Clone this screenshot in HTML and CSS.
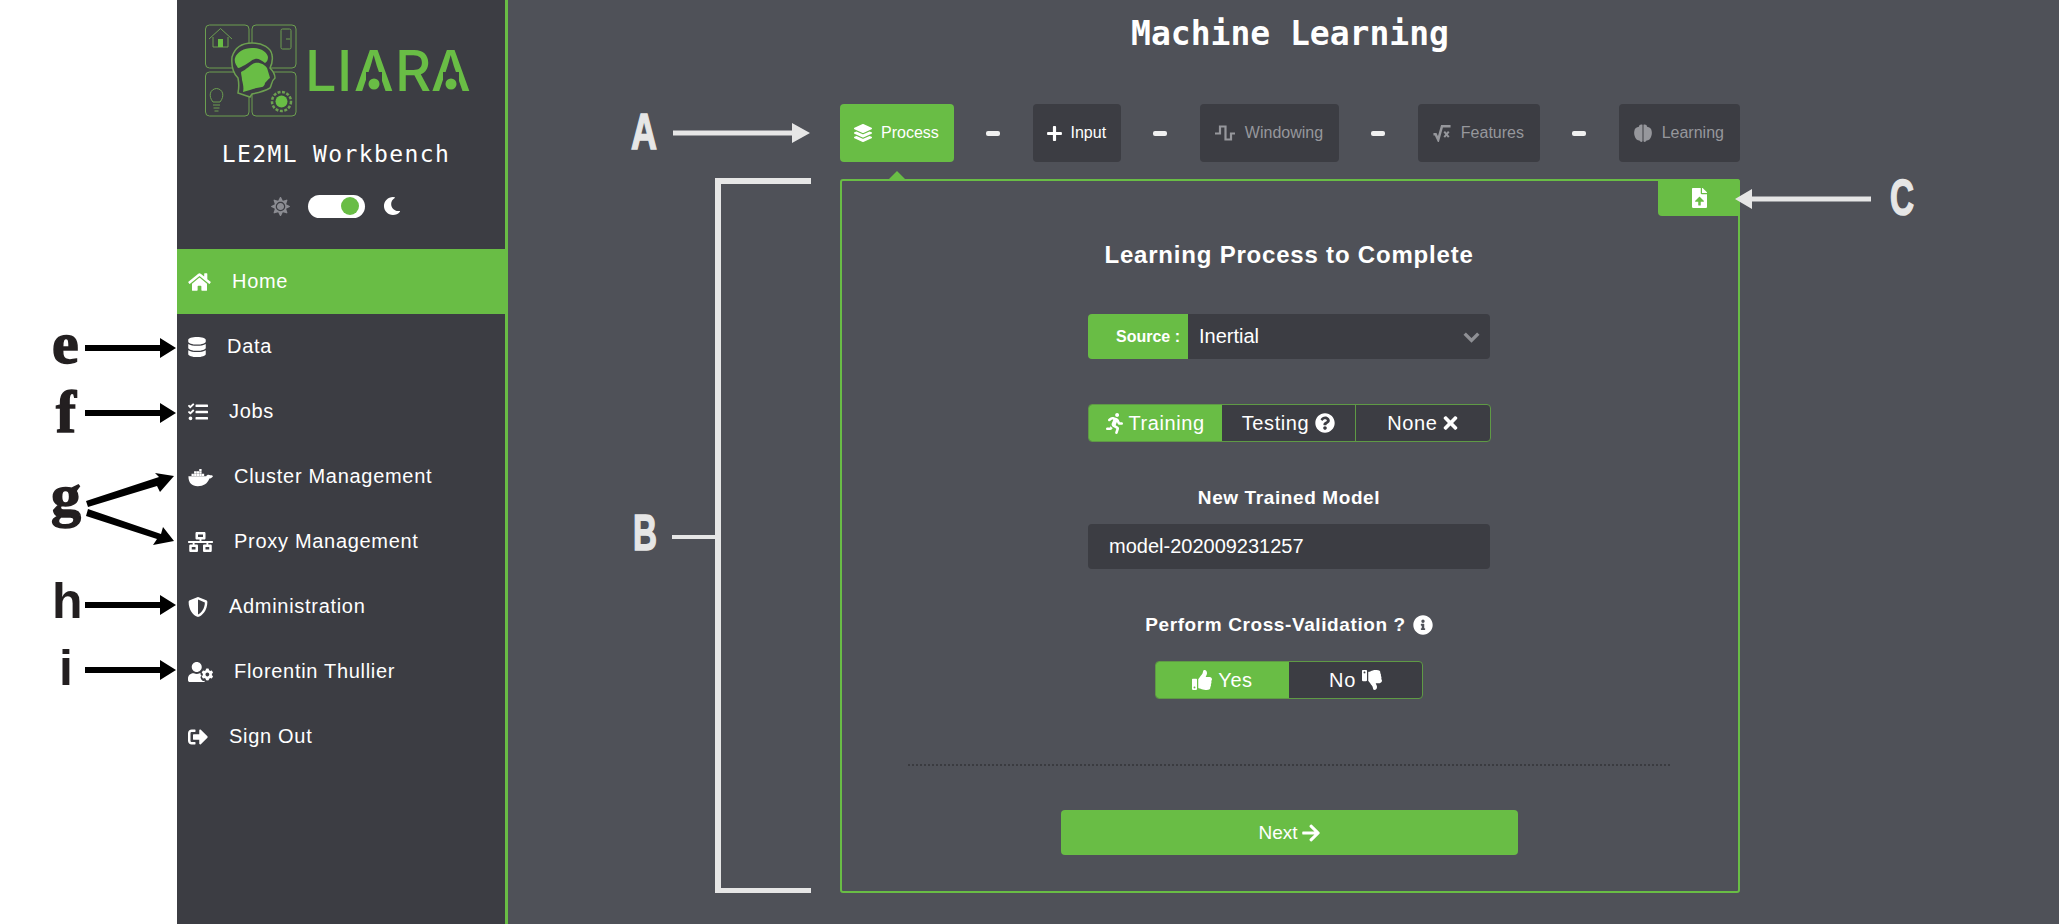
FILE: index.html
```html
<!DOCTYPE html>
<html lang="en">
<head>
    <meta charset="UTF-8">
    <meta name="viewport" content="width=device-width, initial-scale=1.0">
    <title>LE2ML Workbench</title>
    <link rel="stylesheet" href="styles.css">
</head>
<body>
    <svg class="icon-defs" aria-hidden="true">
        <symbol id="i-home" viewBox="0 0 576 512"><path d="M280.37 148.26L96 300.11V464a16 16 0 0 0 16 16l112.06-.29a16 16 0 0 0 15.92-16V368a16 16 0 0 1 16-16h64a16 16 0 0 1 16 16v95.64a16 16 0 0 0 16 16.05L464 480a16 16 0 0 0 16-16V300L295.67 148.26a12.19 12.19 0 0 0-15.3 0zM571.6 251.47L488 182.56V44.05a12 12 0 0 0-12-12h-56a12 12 0 0 0-12 12v72.61L318.47 43a48 48 0 0 0-61 0L4.34 251.47a12 12 0 0 0-1.6 16.9l25.5 31A12 12 0 0 0 45.15 301l235.22-193.74a12.19 12.19 0 0 1 15.3 0L530.9 301a12 12 0 0 0 16.9-1.6l25.5-31a12 12 0 0 0-1.7-16.93z"/></symbol>
        <symbol id="i-database" viewBox="0 0 448 512"><path d="M448 73.143v45.714C448 159.143 347.667 192 224 192S0 159.143 0 118.857V73.143C0 32.857 100.333 0 224 0s224 32.857 224 73.143zM448 176v102.857C448 319.143 347.667 352 224 352S0 319.143 0 278.857V176c48.125 33.143 136.208 48.572 224 48.572S399.874 209.143 448 176zm0 160v102.857C448 479.143 347.667 512 224 512S0 479.143 0 438.857V336c48.125 33.143 136.208 48.572 224 48.572S399.874 369.143 448 336z"/></symbol>
        <symbol id="i-tasks" viewBox="0 0 512 512"><path d="M139.61 35.5a12 12 0 0 0-17 0L58.93 98.81l-22.7-22.12a12 12 0 0 0-17 0L3.53 92.41a12 12 0 0 0 0 17l47.59 47.4a12.78 12.78 0 0 0 17.61 0l15.59-15.62L156.52 69a12.09 12.09 0 0 0 .09-17zm0 159.19a12 12 0 0 0-17 0l-63.68 63.72-22.7-22.1a12 12 0 0 0-17 0L3.53 252a12 12 0 0 0 0 17L51 316.5a12.77 12.77 0 0 0 17.6 0l15.7-15.69 72.2-72.22a12 12 0 0 0 .09-16.9zM64 368c-26.49 0-48.59 21.5-48.59 48S37.53 464 64 464a48 48 0 0 0 0-96zm432 16H208a16 16 0 0 0-16 16v32a16 16 0 0 0 16 16h288a16 16 0 0 0 16-16v-32a16 16 0 0 0-16-16zm0-320H208a16 16 0 0 0-16 16v32a16 16 0 0 0 16 16h288a16 16 0 0 0 16-16V80a16 16 0 0 0-16-16zm0 160H208a16 16 0 0 0-16 16v32a16 16 0 0 0 16 16h288a16 16 0 0 0 16-16v-32a16 16 0 0 0-16-16z"/></symbol>
        <symbol id="i-docker" viewBox="0 0 640 512"><path d="M10 235H468C478 195 530 185 572 210C612 205 632 220 640 235C616 280 572 292 548 292C500 420 400 490 250 490C100 490 14 410 10 235Z"/><path d="M90 172h60v56h-60zM156 172h60v56h-60zM222 172h60v56h-60zM288 172h60v56h-60zM354 172h60v56h-60zM156 110h60v56h-60zM222 110h60v56h-60zM288 110h60v56h-60zM288 48h60v56h-60z"/></symbol>
        <symbol id="i-network" viewBox="0 0 640 512"><path d="M640 264v-16c0-8.84-7.16-16-16-16H344v-40h72c17.67 0 32-14.33 32-32V32c0-17.67-14.33-32-32-32H224c-17.67 0-32 14.33-32 32v128c0 17.67 14.33 32 32 32h72v40H16c-8.84 0-16 7.16-16 16v16c0 8.84 7.16 16 16 16h104v40H64c-17.67 0-32 14.33-32 32v128c0 17.67 14.33 32 32 32h160c17.67 0 32-14.33 32-32V352c0-17.67-14.33-32-32-32h-56v-40h304v40h-56c-17.67 0-32 14.33-32 32v128c0 17.67 14.33 32 32 32h160c17.67 0 32-14.33 32-32V352c0-17.67-14.33-32-32-32h-56v-40h104c8.84 0 16-7.16 16-16zM256 128V64h128v64H256zm-64 320H96v-64h96v64zm352 0h-96v-64h96v64z"/></symbol>
        <symbol id="i-shield" viewBox="0 0 512 512"><path d="M466.5 83.7l-192-80a48.15 48.15 0 0 0-36.9 0l-192 80C27.7 91.1 16 108.6 16 128c0 198.5 114.5 335.7 221.5 380.3 11.8 4.9 25.1 4.9 36.9 0C360.1 472.6 496 349.3 496 128c0-19.4-11.7-36.9-29.5-44.3zM256.1 446.3l-.1-381 175.9 73.3c-3.3 151.4-82.1 261.1-175.8 307.7z"/></symbol>
        <symbol id="i-user-cog" viewBox="0 0 640 512"><path d="M610.5 341.3c2.6-14.1 2.6-28.5 0-42.6l25.8-14.9c3-1.7 4.3-5.2 3.3-8.5-6.7-21.6-18.2-41.2-33.2-57.4-2.3-2.5-6-3.1-9-1.4l-25.8 14.9c-10.9-9.3-23.4-16.5-36.9-21.3v-29.8c0-3.4-2.4-6.4-5.7-7.1-22.3-5-45-4.8-66.2 0-3.3.7-5.7 3.7-5.7 7.1v29.8c-13.5 4.8-26 12-36.9 21.3l-25.8-14.9c-2.9-1.7-6.7-1.1-9 1.4-15 16.2-26.5 35.8-33.2 57.4-1 3.3.4 6.8 3.3 8.5l25.8 14.9c-2.6 14.1-2.6 28.5 0 42.6l-25.8 14.9c-3 1.7-4.3 5.2-3.3 8.5 6.7 21.6 18.2 41.1 33.2 57.4 2.3 2.5 6 3.1 9 1.4l25.8-14.9c10.9 9.3 23.4 16.5 36.9 21.3v29.8c0 3.4 2.4 6.4 5.7 7.1 22.3 5 45 4.8 66.2 0 3.3-.7 5.7-3.7 5.7-7.1v-29.8c13.5-4.8 26-12 36.9-21.3l25.8 14.9c2.9 1.7 6.7 1.1 9-1.4 15-16.2 26.5-35.8 33.2-57.4 1-3.3-.4-6.8-3.3-8.5l-25.8-14.9zM496 368.5c-26.8 0-48.5-21.8-48.5-48.5s21.8-48.5 48.5-48.5 48.5 21.8 48.5 48.5-21.7 48.5-48.5 48.5zM224 256c70.7 0 128-57.3 128-128S294.7 0 224 0 96 57.3 96 128s57.3 128 128 128zm201.2 226.5c-2.3-1.2-4.6-2.6-6.8-3.9l-7.9 4.6c-6 3.4-12.8 5.3-19.6 5.3-10.9 0-21.4-4.6-28.9-12.6-18.3-19.8-32.3-43.9-40.2-69.6-5.5-17.7 1.9-36.4 17.9-45.7l7.9-4.6c-.1-2.6-.1-5.2 0-7.8l-7.9-4.6c-16-9.2-23.4-28-17.9-45.7.9-2.9 2.2-5.8 3.2-8.7-3.8-.3-7.5-1.2-11.4-1.2h-16.7c-22.2 10.2-46.9 16-72.9 16s-50.6-5.8-72.9-16h-16.7C60.2 288 0 348.2 0 422.4V464c0 26.5 21.5 48 48 48h352c10.1 0 19.5-3.2 27.2-8.5-1.2-3.8-2-7.7-2-11.8v-9.2z"/></symbol>
        <symbol id="i-sign-out" viewBox="0 0 512 512"><path d="M497 273L329 441c-15 15-41 4.5-41-17v-96H152c-13.3 0-24-10.7-24-24v-96c0-13.3 10.7-24 24-24h136V88c0-21.4 25.9-32 41-17l168 168c9.3 9.4 9.3 24.6 0 34zM192 436v-40c0-6.6-5.4-12-12-12H96c-17.7 0-32-14.3-32-32V160c0-17.7 14.3-32 32-32h84c6.6 0 12-5.4 12-12V76c0-6.6-5.4-12-12-12H96c-53 0-96 43-96 96v192c0 53 43 96 96 96h84c6.6 0 12-5.4 12-12z"/></symbol>
        <symbol id="i-sun" viewBox="0 0 512 512"><path d="M256 160c-52.9 0-96 43.1-96 96s43.1 96 96 96 96-43.1 96-96-43.1-96-96-96zm246.4 80.5l-94.7-47.3 33.5-100.4c4.5-13.6-8.4-26.5-21.9-21.9l-100.4 33.5-47.4-94.8c-6.4-12.8-24.6-12.8-31 0l-47.3 94.7L92.7 70.8c-13.6-4.5-26.5 8.4-21.9 21.9l33.5 100.4-94.7 47.4c-12.8 6.4-12.8 24.6 0 31l94.7 47.3-33.5 100.5c-4.5 13.6 8.4 26.5 21.9 21.9l100.4-33.5 47.3 94.7c6.4 12.8 24.6 12.8 31 0l47.3-94.7 100.4 33.5c13.6 4.5 26.5-8.4 21.9-21.9l-33.5-100.4 94.7-47.3c13-6.5 13-24.7.2-31.1zm-155.9 106c-49.9 49.9-131.1 49.9-181 0-49.9-49.9-49.9-131.1 0-181 49.9-49.9 131.1-49.9 181 0 49.9 49.9 49.9 131.1 0 181z"/></symbol>
        <symbol id="i-moon" viewBox="0 0 512 512"><path d="M283.211 512c78.962 0 151.079-35.925 198.857-94.792 7.068-8.708-.639-21.43-11.562-19.35-124.203 23.654-238.262-71.576-238.262-196.954 0-72.222 38.662-138.635 101.498-174.394 9.686-5.512 7.25-20.197-3.756-22.23A258.156 258.156 0 0 0 283.211 0c-141.309 0-256 114.511-256 256 0 141.309 114.511 256 256 256z"/></symbol>
        <symbol id="i-layers" viewBox="0 0 512 512"><path d="M12.41 148.02l232.94 105.67c6.8 3.09 14.49 3.09 21.29 0l232.94-105.67c16.55-7.51 16.55-32.52 0-40.03L266.65 2.31a25.607 25.607 0 0 0-21.29 0L12.41 107.98c-16.55 7.51-16.55 32.53 0 40.04zm487.18 88.28l-58.09-26.33-161.64 73.27c-7.56 3.43-15.59 5.17-23.86 5.17s-16.29-1.74-23.86-5.17L70.51 209.97l-58.1 26.33c-16.55 7.5-16.55 32.5 0 40l232.94 105.59c6.8 3.08 14.49 3.08 21.29 0L499.59 276.3c16.55-7.5 16.55-32.5 0-40zm0 127.8l-57.87-26.23-161.86 73.37c-7.56 3.43-15.59 5.17-23.86 5.17s-16.29-1.74-23.86-5.17L70.29 337.87 12.41 364.1c-16.55 7.5-16.55 32.5 0 40l232.94 105.59c6.8 3.08 14.49 3.08 21.29 0L499.59 404.1c16.55-7.5 16.55-32.5 0-40z"/></symbol>
        <symbol id="i-plus" viewBox="0 0 448 512"><path d="M416 208H272V64c0-17.67-14.33-32-32-32h-32c-17.67 0-32 14.33-32 32v144H32c-17.67 0-32 14.33-32 32v32c0 17.67 14.33 32 32 32h144v144c0 17.67 14.33 32 32 32h32c17.67 0 32-14.33 32-32V304h144c17.67 0 32-14.33 32-32v-32c0-17.67-14.33-32-32-32z"/></symbol>
        <symbol id="i-wave" viewBox="0 0 20 20"><path d="M0 10.5h5V3.5h5.500v13H16v-6h4" fill="none" stroke="currentColor" stroke-width="2.2"/></symbol>
        <symbol id="i-sqrt" viewBox="0 0 20 20"><path d="M0.5 11.500h2.500l2.800 6L10 2.500h9.500" fill="none" stroke="currentColor" stroke-width="2.800"/><path d="M12.500 8.500l5 6M17.500 8.500l-5 6" fill="none" stroke="currentColor" stroke-width="2.200"/></symbol>
        <symbol id="i-brain" viewBox="40 10 432 480" preserveAspectRatio="none"><path d="M244 30C195 10 165 40 158 80C105 90 50 130 50 190C40 230 40 300 60 340C70 400 125 450 170 450C190 490 225 500 244 470Z"/><path d="M268 30C317 10 347 40 354 80C407 90 462 130 462 190C472 230 472 300 452 340C442 400 387 450 342 450C322 490 287 500 268 470Z"/></symbol>
        <symbol id="i-file-up" viewBox="0 0 384 512"><path d="M224 136V0H24C10.7 0 0 10.7 0 24v464c0 13.3 10.7 24 24 24h336c13.3 0 24-10.7 24-24V160H248c-13.2 0-24-10.8-24-24zm65.18 216.01H224v80c0 8.84-7.16 16-16 16h-32c-8.84 0-16-7.16-16-16v-80H94.82c-14.28 0-21.41-17.29-11.27-27.36l96.42-95.7c6.65-6.61 17.39-6.61 24.04 0l96.42 95.7c10.15 10.07 3.03 27.36-11.23 27.36zM377 105L279.1 7c-4.5-4.5-10.6-7-17-7H256v128h128v-6.1c0-6.3-2.5-12.4-7-16.9z"/></symbol>
        <symbol id="i-running" viewBox="0 0 416 512"><path d="M272 96c26.51 0 48-21.49 48-48S298.51 0 272 0s-48 21.49-48 48 21.49 48 48 48zM113.69 317.47l-14.8 34.52H32c-17.67 0-32 14.33-32 32s14.33 32 32 32h77.45c19.25 0 36.58-11.44 44.11-29.09l8.79-20.52-10.67-6.3c-17.32-10.23-30.06-25.37-37.99-42.61zM384 223.99h-44.03l-26.06-53.25c-12.5-25.55-35.45-44.23-61.78-50.94l-71.08-21.14c-28.3-6.8-57.77-.55-80.84 17.14l-39.67 30.41c-14.03 10.75-16.69 30.83-5.92 44.86s30.84 16.66 44.86 5.92l39.69-30.41c7.67-5.89 17.44-8 25.27-6.14l14.7 4.37-37.46 87.39c-12.62 29.48-1.31 64.01 26.3 80.31l84.98 50.17-27.47 87.73c-5.28 16.86 4.11 34.81 20.97 40.09 3.19 1 6.41 1.48 9.58 1.48 13.61 0 26.23-8.77 30.52-22.45l31.64-101.06c5.91-20.77-2.89-43.08-21.64-54.39l-61.24-36.14 31.31-78.28 20.27 41.43c8 16.34 24.92 26.89 43.11 26.89H384c17.67 0 32-14.33 32-32s-14.33-31.99-32-31.99z"/></symbol>
        <symbol id="i-question" viewBox="0 0 512 512"><path d="M504 256c0 136.997-111.043 248-248 248S8 392.997 8 256C8 119.083 119.043 8 256 8s248 111.083 248 248zM262.655 90c-54.497 0-89.255 22.957-116.549 63.758-3.536 5.286-2.353 12.415 2.715 16.258l34.699 26.31c5.205 3.947 12.621 3.008 16.665-2.122 17.864-22.658 30.113-35.797 57.303-35.797 20.429 0 45.698 13.148 45.698 32.958 0 14.976-12.363 22.667-32.534 33.976C247.128 238.528 216 254.941 216 296v4c0 6.627 5.373 12 12 12h56c6.627 0 12-5.373 12-12v-1.333c0-28.462 83.186-29.647 83.186-106.667 0-58.002-60.165-102-116.531-102zM256 338c-25.365 0-46 20.635-46 46 0 25.364 20.635 46 46 46s46-20.636 46-46c0-25.365-20.635-46-46-46z"/></symbol>
        <symbol id="i-times" viewBox="0 0 352 512"><path d="M242.72 256l100.07-100.07c12.28-12.28 12.28-32.19 0-44.48l-22.24-22.24c-12.28-12.28-32.19-12.28-44.48 0L176 189.28 75.93 89.21c-12.28-12.28-32.19-12.28-44.48 0L9.21 111.45c-12.28 12.28-12.28 32.19 0 44.48L109.28 256 9.21 356.07c-12.28 12.28-12.28 32.19 0 44.48l22.24 22.24c12.28 12.28 32.2 12.28 44.48 0L176 322.72l100.07 100.07c12.28 12.28 32.2 12.28 44.48 0l22.24-22.24c12.28-12.28 12.28-32.19 0-44.48L242.72 256z"/></symbol>
        <symbol id="i-info" viewBox="0 0 512 512"><path d="M256 8C119.043 8 8 119.083 8 256c0 136.997 111.043 248 248 248s248-111.003 248-248C504 119.083 392.957 8 256 8zm0 110c23.196 0 42 18.804 42 42s-18.804 42-42 42-42-18.804-42-42 18.804-42 42-42zm56 254c0 6.627-5.373 12-12 12h-88c-6.627 0-12-5.373-12-12v-24c0-6.627 5.373-12 12-12h12v-64h-12c-6.627 0-12-5.373-12-12v-24c0-6.627 5.373-12 12-12h64c6.627 0 12 5.373 12 12v100h12c6.627 0 12 5.373 12 12v24z"/></symbol>
        <symbol id="i-thumb" viewBox="0 0 512 512"><path d="M104 224H24c-13.255 0-24 10.745-24 24v240c0 13.255 10.745 24 24 24h80c13.255 0 24-10.745 24-24V248c0-13.255-10.745-24-24-24zM64 472c-13.255 0-24-10.745-24-24s10.745-24 24-24 24 10.745 24 24-10.745 24-24 24zM384 81.452c0 42.416-25.97 66.208-33.277 94.548h101.723c33.397 0 59.397 27.746 59.553 58.098.084 17.938-7.546 37.249-19.439 49.197l-.11.11c9.836 23.337 8.237 56.037-9.308 79.469 8.681 25.895-.069 57.704-16.382 74.757 4.298 17.598 2.244 32.575-6.148 44.632C440.202 511.587 389.616 512 346.839 512l-2.845-.001c-48.287-.017-87.806-17.598-119.56-31.725-15.957-7.099-36.821-15.887-52.651-16.178-6.54-.12-11.783-5.457-11.783-11.998v-213.77c0-3.2 1.282-6.271 3.558-8.521 39.614-39.144 56.648-80.587 89.117-113.111 14.804-14.832 20.188-37.236 25.393-58.902C282.515 39.293 291.817 0 312 0c24 0 72 8 72 81.452z"/></symbol>
        <symbol id="i-arrow" viewBox="0 0 448 512"><path d="M190.5 66.9l22.2-22.2c9.4-9.4 24.6-9.4 33.9 0L441 239c9.4 9.4 9.4 24.6 0 33.9L246.6 467.3c-9.4 9.4-24.6 9.4-33.9 0l-22.2-22.2c-9.5-9.5-9.3-25 .4-34.3L311.4 296H24c-13.3 0-24-10.7-24-24v-32c0-13.3 10.7-24 24-24h287.4L190.9 101.2c-9.8-9.3-10-24.8-.4-34.3z"/></symbol>
    </svg>

    <div class="page">
        <aside class="sidebar">
            <svg class="logo" viewBox="0 0 270 96">
                <g class="logo-line">
                    <rect x="0.500" y="3" width="43.500" height="43" rx="4"/>
                    <rect x="47" y="3" width="44" height="43" rx="4"/>
                    <rect x="0.500" y="50" width="43.500" height="44" rx="4"/>
                    <rect x="47" y="50" width="44" height="44" rx="4"/>
                    <path d="M4 17L15.500 6.500 27 17M8 15v10h15V15"/>
                    <rect x="76" y="7" width="10" height="20" rx="1.500"/>
                    <path d="M81 17h4"/>
                    <path d="M8 80c-5-6-3-13 3.500-13.500 6.500.5 8.500 7.500 3.500 13.500zM8 83h7M8.500 86h6M9.500 89h4"/>
                    <circle cx="76.500" cy="79.500" r="9.500" stroke-width="2.500" stroke-dasharray="3 1.500"/>
                    <path class="logo-halo" d="M27 35C30 25 38 21 47 21C58 21 66 26 67 33C68 38 67 42 65 46C68 49 70 52 70 56C66 59 67 63 65 66C58 70 52 71 47 72L45 75L33 71C34 66 34 61 33 56C29 52 26 46 27 35Z"/>
                </g>
                <path class="logo-fill" d="M30 36C32 30 39 26 47 26C56 26 62 30 63 35C63 38 62 40 60 41C56 38 53 36 50 37C46 38 44 41 40 43C37 44 35 46 33 46C31 43 29 40 30 36Z"/>
                <path class="logo-fill" d="M36 50C41 48 46 42 50 41C55 40 60 43 62 46C63 49 64 52 65 56C63 57 62 59 60 61C60 63 58 65 57 65C53 66 49 66 45 68L38 70C39 66 38 62 37 58C37 55 36 53 36 50Z"/>
                <circle class="logo-fill" cx="76.500" cy="79.500" r="6"/>
                <rect class="logo-fill" x="13" y="17" width="5" height="8"/>
                <text class="logo-word" x="100 132 149 190 226" y="69">LIARA</text>
                <rect class="logo-cut" x="161" y="50" width="16" height="10"/>
                <rect class="logo-cut" x="238" y="50" width="16" height="10"/>
                <circle class="logo-fill" cx="169" cy="62" r="5.500"/>
                <circle class="logo-fill" cx="246" cy="62" r="5.500"/>
            </svg>
            <div class="brand">LE2ML Workbench</div>
            <div class="theme-row">
                <svg class="theme-sun"><use href="#i-sun"/></svg>
                <span class="switch"><span class="switch-knob"></span></span>
                <svg class="theme-moon"><use href="#i-moon"/></svg>
            </div>
            <nav class="nav">
                <a class="nav-item active"><svg class="ic-home"><use href="#i-home"/></svg>Home</a>
                <a class="nav-item"><svg class="ic-db"><use href="#i-database"/></svg>Data</a>
                <a class="nav-item"><svg class="ic-square"><use href="#i-tasks"/></svg>Jobs</a>
                <a class="nav-item"><svg class="ic-wide"><use href="#i-docker"/></svg>Cluster Management</a>
                <a class="nav-item"><svg class="ic-wide"><use href="#i-network"/></svg>Proxy Management</a>
                <a class="nav-item"><svg class="ic-square"><use href="#i-shield"/></svg>Administration</a>
                <a class="nav-item"><svg class="ic-wide"><use href="#i-user-cog"/></svg>Florentin Thullier</a>
                <a class="nav-item"><svg class="ic-square"><use href="#i-sign-out"/></svg>Sign Out</a>
            </nav>
        </aside>

        <main class="main">
            <h1 class="title">Machine Learning</h1>

            <div class="steps">
                <div class="step current"><svg class="step-ic"><use href="#i-layers"/></svg>Process</div>
                <span class="step-sep"></span>
                <div class="step"><svg class="step-ic-plus"><use href="#i-plus"/></svg>Input</div>
                <span class="step-sep"></span>
                <div class="step off"><svg class="step-ic-wide"><use href="#i-wave"/></svg>Windowing</div>
                <span class="step-sep"></span>
                <div class="step off"><svg class="step-ic"><use href="#i-sqrt"/></svg>Features</div>
                <span class="step-sep"></span>
                <div class="step off"><svg class="step-ic"><use href="#i-brain"/></svg>Learning</div>
            </div>

            <section class="card">
                <div class="card-tab"><svg class="tab-ic"><use href="#i-file-up"/></svg></div>
                <h2 class="card-title">Learning Process to Complete</h2>

                <div class="source">
                    <div class="source-label">Source :</div>
                    <div class="source-select">Inertial
                        <svg class="chevron" viewBox="0 0 20 14"><path d="M2 3l8 8 8-8"/></svg>
                    </div>
                </div>

                <div class="choice choice-wide">
                    <div class="choice-btn on"><svg class="c-run"><use href="#i-running"/></svg>Training</div>
                    <div class="choice-btn">Testing<svg class="c-ic"><use href="#i-question"/></svg></div>
                    <div class="choice-btn">None<svg class="c-x"><use href="#i-times"/></svg></div>
                </div>

                <label class="field-label">New Trained Model</label>
                <div class="text-input">model-202009231257</div>

                <div class="cv-label">Perform Cross-Validation ?<svg class="cv-ic"><use href="#i-info"/></svg></div>
                <div class="choice choice-small">
                    <div class="choice-btn on"><svg class="c-ic"><use href="#i-thumb"/></svg>Yes</div>
                    <div class="choice-btn">No<svg class="c-ic flip"><use href="#i-thumb"/></svg></div>
                </div>

                <hr class="divider">

                <button class="next">Next<svg class="next-ic"><use href="#i-arrow"/></svg></button>
            </section>
        </main>
    </div>

    <!-- callouts drawn on top of the screenshot -->
    <svg class="callouts" viewBox="0 0 2059 924">
        <g class="dark">
            <text class="serif" x="52" y="363">e</text>
            <text class="serif" x="56" y="432">f</text>
            <text class="serif" x="51" y="515">g</text>
            <text class="sans" x="52" y="618">h</text>
            <text class="sans" x="59" y="685">i</text>
            <path d="M85 345h75v-7l16 10-16 10v-7H85zM85 410h75v-7l16 10-16 10v-7H85zM85 602h75v-7l16 10-16 10v-7H85zM85 667h75v-7l16 10-16 10v-7H85z"/>
            <path d="M86 501l73-24-4-4 19 3-14 16-3-6-69 21z"/>
            <path d="M88 509l73 25 2-7 11 14-21 4 4-6-71-23z"/>
        </g>
        <g class="light">
            <text class="narrow" x="631" y="149" textLength="26" lengthAdjust="spacingAndGlyphs">A</text>
            <text class="narrow" x="633" y="550" textLength="24" lengthAdjust="spacingAndGlyphs">B</text>
            <text class="narrow" x="1890" y="215" textLength="24" lengthAdjust="spacingAndGlyphs">C</text>
            <path d="M673 130.500h119V123l18 10-18 10v-7.500H673z"/>
            <path d="M1871 196.500h-119V189l-17 10 17 10v-7.500h119z"/>
            <path d="M672 535h43v4h-43zM715 178h96v6h-90v704h90v5h-96z"/>
        </g>
    </svg>
</body>
</html>
```

FILE: styles.css
```css
* {
    box-sizing: border-box;
}
body {
    margin: 0;
    height: 924px;
    overflow: hidden;
    position: relative;
    background: #fff;
    color: #fff;
    font-family: "Liberation Sans", Arial, sans-serif;
}
svg {
    fill: currentColor;
}
.icon-defs {
    display: none;
}
.page {
    display: flex;
    height: 924px;
    padding-left: 177px;
}

/* sidebar */
.sidebar {
    width: 331px;
    flex-shrink: 0;
    background: #3c3d43;
    border-right: 3px solid #69bd45;
}
.logo {
    display: block;
    width: 270px;
    height: 96px;
    margin: 22px 0 0 28px;
}
.logo-line {
    fill: none;
    stroke: #6c9f50;
    stroke-width: 1;
}
.logo-halo {
    fill: #3c3d43;
    stroke-width: 1.500;
}
.logo-fill {
    fill: #69bd45;
}
.logo-cut {
    fill: #3c3d43;
}
.logo-word {
    fill: #69bd45;
    font-family: Inter, sans-serif;
    font-size: 56px;
    font-weight: 500;
}
.brand {
    margin-top: 21px;
    padding-right: 10px;
    text-align: center;
    font-family: "DejaVu Sans Mono", monospace;
    font-size: 23px;
    line-height: 30px;
    letter-spacing: 1.400px;
}
.theme-row {
    display: flex;
    align-items: center;
    justify-content: center;
    height: 24px;
    margin-top: 25px;
    padding-right: 10px;
}
.theme-sun {
    width: 19px;
    height: 19px;
    color: #8b8c92;
}
.theme-moon {
    width: 18px;
    height: 18px;
}
.switch {
    width: 57px;
    height: 23px;
    margin: 0 18px;
    padding: 3px 6px;
    display: flex;
    justify-content: flex-end;
    background: #fff;
    border-radius: 12px;
}
.switch-knob {
    width: 18px;
    height: 18px;
    margin-top: -.5px;
    background: #69bd45;
    border-radius: 50%;
}
.nav {
    margin-top: 31px;
}
.nav-item {
    display: flex;
    align-items: center;
    gap: 21px;
    height: 65px;
    padding-left: 11px;
    font-size: 20px;
    letter-spacing: .7px;
}
.nav-item.active {
    background: #69bd45;
}
.ic-home { width: 23px; height: 20px; }
.ic-db { width: 18px; height: 20px; }
.ic-square { width: 20px; height: 20px; }
.ic-wide { width: 25px; height: 20px; }

/* main column */
.main {
    flex: 1;
    display: flex;
    flex-direction: column;
    align-items: center;
    padding-left: 13px;
    background: #4f5158;
}
.title {
    margin: 14px 0 0;
    font-family: "DejaVu Sans Mono", monospace;
    font-size: 33px;
    line-height: 40px;
    font-weight: 700;
}
.steps {
    display: flex;
    align-items: center;
    justify-content: space-between;
    width: 900px;
    margin-top: 50px;
}
.step {
    position: relative;
    display: flex;
    align-items: center;
    gap: 9px;
    height: 58px;
    padding: 0 15px 0 14px;
    background: #3c3d43;
    border-radius: 4px;
    font-size: 16px;
}
.step.current {
    background: #69bd45;
}
.step.current::after {
    content: "";
    position: absolute;
    left: 50%;
    top: 67px;
    margin-left: -8px;
    border: 8px solid transparent;
    border-top: 0;
    border-bottom-color: #69bd45;
}
.step.off {
    gap: 10px;
    padding: 0 16px 0 15px;
    color: #96979c;
}
.step-sep {
    width: 14px;
    height: 5px;
    background: #f0f0f0;
    border-radius: 2px;
}
.step-ic { width: 18px; height: 18px; }
.step-ic-plus { width: 15px; height: 17px; }
.step-ic-wide { width: 20px; height: 20px; }

/* card */
.card {
    position: relative;
    display: flex;
    flex-direction: column;
    align-items: center;
    width: 900px;
    height: 714px;
    margin-top: 17px;
    padding-right: 2px;
    border: 2px solid #69bd45;
    border-radius: 3px;
}
.card-tab {
    position: absolute;
    top: -2px;
    right: -2px;
    display: flex;
    align-items: center;
    justify-content: center;
    width: 82px;
    height: 37px;
    background: #69bd45;
    border-radius: 0 3px 0 4px;
}
.tab-ic {
    width: 15px;
    height: 20px;
}
.card-title {
    margin: 58px 0 0;
    font-size: 24px;
    line-height: 32px;
    font-weight: 700;
    letter-spacing: .8px;
}
.source {
    display: flex;
    width: 402px;
    height: 45px;
    margin-top: 43px;
    border-radius: 4px;
    overflow: hidden;
}
.source-label {
    display: flex;
    align-items: center;
    justify-content: flex-end;
    width: 100px;
    padding-right: 8px;
    background: #69bd45;
    font-size: 16px;
    font-weight: 700;
}
.source-select {
    flex: 1;
    display: flex;
    align-items: center;
    justify-content: space-between;
    padding: 0 10px 0 11px;
    background: #3c3d43;
    font-size: 20px;
}
.chevron {
    width: 17px;
    height: 12px;
    fill: none;
    stroke: #8f9095;
    stroke-width: 4;
}
.choice {
    display: flex;
    height: 38px;
    background: #3c3d43;
    border: 1px solid #5f9a45;
    border-radius: 4px;
    overflow: hidden;
}
.choice-wide {
    width: 403px;
    margin-top: 45px;
}
.choice-small {
    width: 268px;
    margin-top: 24px;
}
.choice-btn {
    flex: 1;
    display: flex;
    align-items: center;
    justify-content: center;
    gap: 6px;
    font-size: 20px;
    letter-spacing: .6px;
}
.choice-btn + .choice-btn {
    border-left: 1px solid #5f9a45;
}
.choice-btn.on {
    background: #69bd45;
}
.choice-btn.on + .choice-btn {
    border-left: 0;
}
.c-run { width: 17px; height: 21px; }
.c-ic { width: 20px; height: 20px; }
.c-x { width: 15px; height: 20px; }
.flip {
    transform: scale(-1, -1) scaleX(-1);
}
.field-label {
    margin-top: 44px;
    font-size: 19px;
    line-height: 24px;
    font-weight: 700;
    letter-spacing: .6px;
}
.text-input {
    width: 402px;
    height: 45px;
    margin-top: 14px;
    padding-left: 21px;
    background: #3c3d43;
    border-radius: 4px;
    font-size: 20px;
    line-height: 45px;
}
.cv-label {
    display: flex;
    align-items: center;
    gap: 7px;
    margin-top: 44px;
    font-size: 19px;
    line-height: 24px;
    font-weight: 700;
    letter-spacing: .6px;
}
.cv-ic {
    width: 20px;
    height: 20px;
}
.divider {
    width: 762px;
    margin: 65px 0 0;
    border: 0;
    border-top: 2px dotted #3a3b40;
}
.next {
    display: flex;
    align-items: center;
    justify-content: center;
    gap: 4px;
    width: 457px;
    height: 45px;
    margin-top: 44px;
    padding: 0;
    background: #69bd45;
    border: 0;
    border-radius: 4px;
    color: #fff;
    font-family: inherit;
    font-size: 19px;
}
.next-ic {
    width: 18px;
    height: 20px;
}

/* callouts */
.callouts {
    position: absolute;
    top: 0;
    left: 0;
    width: 2059px;
    height: 924px;
    pointer-events: none;
}
.callouts .dark {
    fill: #000;
}
.callouts .light {
    fill: #e6e6e6;
}
.serif {
    font-family: "Liberation Serif", serif;
    font-size: 60px;
    font-weight: 700;
    fill: #231f20;
    stroke: #231f20;
    stroke-width: 1.500;
}
.sans {
    font-family: "Liberation Sans", sans-serif;
    font-size: 50px;
    font-weight: 700;
    fill: #231f20;
}
.narrow {
    font-family: "Liberation Sans", sans-serif;
    font-size: 50px;
    font-weight: 700;
    stroke: #e6e6e6;
    stroke-width: 1.500;
}
```
